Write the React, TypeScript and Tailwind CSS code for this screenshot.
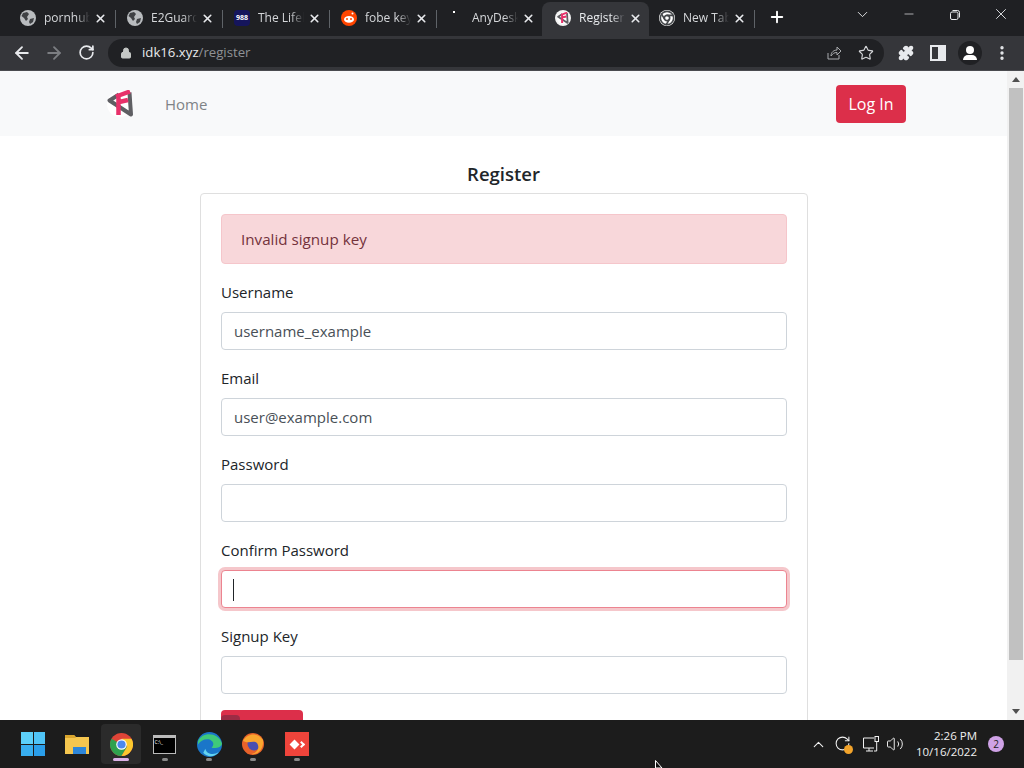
import React from "react";
import { ArrowLeft, ArrowRight, RotateCw, Lock, Star, Puzzle, MoreVertical, X, Plus, ChevronDown, Minus, ChevronUp, Volume2, Chrome } from "lucide-react";

const FONT = "font-['Open_Sans','Noto_Sans',sans-serif]";

function Favicon({ kind }: { kind: string }) {
  if (kind === "globe") return (
    <svg width="16" height="16" viewBox="0 0 16 16"><circle cx="8" cy="8" r="8" fill="#b9bcbf" /><path d="M3 3 L7 2 L9 4 L7 7 L8 9 L6 11 L4 8 L1.500 6z" fill="#3f4144" /><path d="M10 9 L14 8 L13 12 L10 14 L9 12z" fill="#3f4144" /></svg>
  );
  if (kind === "988") return <div className="w-4 h-4 rounded-sm bg-[#15155c] text-white text-[7px] font-bold flex items-center justify-center">988</div>;
  if (kind === "reddit") return (
    <svg width="16" height="16" viewBox="0 0 16 16"><circle cx="8" cy="8" r="8" fill="#ff4500" /><ellipse cx="8" cy="9.400" rx="5" ry="3.400" fill="#fff" /><circle cx="6" cy="9" r="1" fill="#ff4500" /><circle cx="10" cy="9" r="1" fill="#ff4500" /><circle cx="11.500" cy="3.600" r="1" fill="#fff" /></svg>
  );
  if (kind === "dot") return <div className="w-4 h-4 relative"><div className="absolute left-[5px] top-[1px] w-[2px] h-[2px] bg-white" /></div>;
  if (kind === "logo") return (
    <div className="w-4 h-4 rounded-full bg-[#f4f4f4] flex items-center justify-center"><Logo size={12} /></div>
  );
  return <div className="w-4 h-4 rounded-full bg-white flex items-center justify-center"><Chrome size={16} className="text-[#44474a]" strokeWidth={2.4} /></div>;
}

function Logo({ size }: { size: number }) {
  return (
    <svg width={size} height={size} viewBox="0 0 27 27">
      <circle cx="13" cy="14" r="13" fill="#ffffff" />
      <path d="M12 4.500 L2.500 10.500 L24 24.500 L22.500 2.500" fill="none" stroke="#5f5f63" strokeWidth="4" strokeLinejoin="round" />
      <path d="M11.500 25 L11.500 6.500 M9 6.500 L23 1.500 M10 12.500 L21 10" fill="none" stroke="#e8316a" strokeWidth="4.500" />
    </svg>
  );
}

function Tab({ title, icon, active, sep, last }: { title: string; icon: string; active?: boolean; sep?: boolean; last?: boolean }) {
  return (
    <div className={`relative w-[107px] h-[34px] flex items-center shrink-0 pb-[2px] ${last ? "pl-[10px]" : "pl-[13px]"} ${active ? "bg-[#35363a] rounded-t-lg" : ""}`}>
      <Favicon kind={icon} />
      <span className={`ml-2 w-[46px] overflow-hidden whitespace-nowrap text-xs ${active ? "text-[#e8eaed]" : "text-[#d5d7da]"} [mask-image:linear-gradient(to_right,black_70%,transparent)]`}>{title}</span>
      <X size={13} strokeWidth={3} className="ml-[4px] text-[#e8eaed]" />
      {sep && <div className={`absolute top-[8px] h-[18px] w-px bg-[#5f6368] ${last ? "right-[1px]" : "right-[-2px]"}`} />}
    </div>
  );
}

function Field({ label, value, focus }: { label: string; value?: string; focus?: boolean }) {
  return (
    <div className="mb-[16px]">
      <div className="text-[15px] leading-6 text-[#212529] mb-2">{label}</div>
      <div className={`h-[38px] rounded-[4px] bg-white flex items-center px-3 pt-[1px] text-[15px] ${focus ? "border border-[#ec8490] shadow-[0_0_0_3px_rgba(220,53,69,0.28)]" : "border border-[#ced4da]"} text-[#495057]`}>
        {value}
        {focus && <div className="w-px h-[22px] -ml-px bg-[#212529]" />}
      </div>
    </div>
  );
}

function Indicator({ active }: { active?: boolean }) {
  return <div className={`absolute bottom-[3px] left-1/2 -translate-x-1/2 h-[3px] rounded-full ${active ? "w-4 bg-[#dcb2e8]" : "w-[6px] bg-[#8a8a8a]"}`} />;
}

function TaskIcon({ children, active, dot }: { children: React.ReactNode; active?: boolean; dot?: boolean }) {
  return (
    <div className={`relative w-10 h-10 flex items-center justify-center rounded ${active ? "bg-[#2b2b2b]" : ""}`}>
      {children}
      {(dot || active) && <Indicator active={active} />}
    </div>
  );
}

export default function App() {
  return (
    <div className={`h-screen w-full overflow-hidden flex flex-col bg-white ${FONT}`}>
      {/* tab strip */}
      <div className="h-9 bg-[#1f2023] flex items-end pl-[7px] shrink-0">
        <Tab title="pornhub" icon="globe" sep />
        <Tab title="E2Guardian" icon="globe" sep />
        <Tab title="The Lifeline" icon="988" sep />
        <Tab title="fobe keys" icon="reddit" sep />
        <Tab title="AnyDesk" icon="dot" />
        <Tab title="Register" icon="logo" active />
        <Tab title="New Tab" icon="chrome" sep last />
        <Plus size={18} strokeWidth={2.500} className="ml-[12px] mb-[10px] text-white" />
        <ChevronDown size={17} strokeWidth={1.300} className="ml-[68px] mb-[13px] text-[#e8eaed]" />
        <Minus size={14} strokeWidth={1.200} className="ml-[31px] mb-[15px] text-[#e8eaed]" />
        <svg width="12" height="12" viewBox="0 0 12 12" className="ml-[33px] mb-[15px]" fill="none" stroke="#e8eaed"><rect x="1.500" y="3" width="7.500" height="7.500" rx="1.500" /><path d="M3.500 1.500 h5 a2 2 0 0 1 2 2 v5" /></svg>
        <X size={18} strokeWidth={1.200} className="ml-[31px] mb-[13px] text-[#e8eaed]" />
      </div>
      {/* toolbar */}
      <div className="h-[35px] bg-[#35363a] flex items-center pl-[12px] pb-[1px] shrink-0 border-b border-[#4a4b4f]">
        <ArrowLeft size={20} strokeWidth={2.200} className="text-[#e8eaed]" />
        <ArrowRight size={20} strokeWidth={2.200} className="ml-3 text-[#7c7e82]" />
        <RotateCw size={17} strokeWidth={2.400} className="ml-[14px] text-[#e8eaed]" />
        <div className="ml-[13px] w-[776px] h-[28px] rounded-full bg-[#202124] flex items-center pl-[12px] text-[13.200px]">
          <Lock size={12} className="text-[#c4c7c5]" fill="#c4c7c5" />
          <span className="ml-[10px] text-[#e8eaed]">idk16.xyz</span><span className="text-[#8f9296]">/register</span>
          <svg width="16" height="16" viewBox="0 0 16 16" fill="none" stroke="#a8abae" strokeWidth="1" className="ml-auto"><path d="M2 8 v6 h11 v-4" /><path d="M5 11 c0-4 3-6 6-6 V2 l4 4 -4 4 V7.500 c-3 0-4 1-6 3.500z" /></svg>
          <Star size={16} strokeWidth={1.700} className="ml-4 mr-[10px] text-[#d5d7da]" />
        </div>
        <Puzzle size={16} fill="#e8eaed" className="ml-[14px] text-[#e8eaed]" />
        <div className="ml-4 w-4 h-4 border-2 border-[#e8eaed] flex justify-end"><div className="w-[6px] h-full bg-[#e8eaed]" /></div>
        <div className="ml-3 w-6 h-6 rounded-full bg-[#202124] relative overflow-hidden">
          <div className="absolute left-[8px] top-[5px] w-2 h-2 rounded-full bg-white" />
          <div className="absolute left-[5px] top-[14px] w-[14px] h-[5px] rounded-t-md bg-white" />
        </div>
        <MoreVertical size={18} strokeWidth={2.500} className="ml-[11px] text-[#e8eaed]" />
      </div>
      {/* page */}
      <div className="flex-1 min-h-0 flex">
        <div className="flex-1 min-w-0 overflow-hidden text-[#212529]">
          <nav className="h-[65px] bg-[#f8f9fa] flex items-center pl-[107px] pr-[101px]">
            <Logo size={27} />
            <span className="ml-[31px] pt-[1px] text-[15px] text-[#7f8386]">Home</span>
            <button className="ml-auto w-[70px] h-[38px] rounded-[4px] bg-[#dc2f4a] text-white text-base">Log In</button>
          </nav>
          <h1 className="mt-[25px] h-[32px] text-center text-[18.500px] leading-[26px] font-semibold">Register</h1>
          <div className="ml-[200px] w-[608px] border border-[#dfdfdf] rounded-[4px] p-5">
            <div className="h-[50px] mb-[16px] rounded-[4px] bg-[#f8d7da] border border-[#f5c6cb] flex items-center pl-[19px] pt-[1px] text-[15.200px] text-[#74323c]">Invalid signup key</div>
            <Field label="Username" value="username_example" />
            <Field label="Email" value="user@example.com" />
            <Field label="Password" />
            <Field label="Confirm Password" focus />
            <Field label="Signup Key" />
            <button className="relative w-[82px] h-[38px] rounded-[4px] bg-[#dc2f4a] text-white text-base">
              Register
              <span className="absolute left-0 top-[5px] w-[19px] h-[6px] rounded-t-sm bg-[#9c2c45]" />
            </button>
          </div>
        </div>
        {/* scrollbar */}
        <div className="w-[17px] bg-[#f1f1f1] flex flex-col items-center shrink-0">
          <div className="h-[17px] flex items-center justify-center"><div className="border-x-4 border-x-transparent border-b-[5px] border-b-[#505050]" /></div>
          <div className="w-[14px] h-[572px] bg-[#c1c1c1]" />
          <div className="mt-auto h-[17px] flex items-center justify-center"><div className="border-x-4 border-x-transparent border-t-[5px] border-t-[#505050]" /></div>
        </div>
      </div>
      {/* taskbar */}
      <div className="relative h-12 bg-[#1c1c1c] shrink-0 flex items-center pl-[13px] pr-[20px]">
        <div className="flex items-center gap-[4px]">
          <TaskIcon>
            <div className="grid grid-cols-2 gap-[1px] w-6 h-6">
              <div className="bg-[#5cd0fa]" /><div className="bg-[#4fc4f7]" /><div className="bg-[#38aeef]" /><div className="bg-[#2a9eea]" />
            </div>
          </TaskIcon>
          <TaskIcon>
            <svg width="26" height="24" viewBox="0 0 26 24"><path d="M1 3 h9 l2 2 h13 v17 H1z" fill="#f5c64f" /><path d="M1 3 h9 l2 3 H1z" fill="#d9a52e" /><rect x="9" y="15" width="13" height="7" fill="#2d86d9" /></svg>
          </TaskIcon>
          <TaskIcon active>
            <svg width="23" height="23" viewBox="0 0 24 24"><circle cx="12" cy="12" r="12" fill="#de4437" /><path d="M12 12 L1.600 6 A12 12 0 0 0 12 24 L18 14z" fill="#2fa14f" /><path d="M12 6 H22.400 A12 12 0 0 1 12 24 L18 14z" fill="#fbc82e" /><circle cx="12" cy="12" r="5.500" fill="#fff" /><circle cx="12" cy="12" r="4.300" fill="#4a88ee" /></svg>
          </TaskIcon>
          <TaskIcon dot>
            <div className="w-[23px] h-[19px] -ml-[2px] bg-black border border-[#bbb] border-t-[3px] text-[5px] leading-[8px] text-white pl-[1px]">C:\_</div>
          </TaskIcon>
          <TaskIcon dot>
            <svg width="25" height="25" viewBox="0 0 24 24"><circle cx="12" cy="12" r="12" fill="#1a76c9" /><path d="M1 9 C4 0 20 -1 24 11 C24 15 17 16 14 15 C18 11 14 7 10 7 C6 7 3 9 1 12z" fill="#3fc97a" /><path d="M8 16 C9 21 16 23 21 19 C18 24 10 25 6 20z" fill="#64d4f0" /></svg>
          </TaskIcon>
          <TaskIcon dot>
            <svg width="24" height="24" viewBox="0 0 24 24"><circle cx="12" cy="12" r="11" fill="#e8622a" /><circle cx="13" cy="12" r="6.500" fill="#4a4fb0" /><path d="M2 9 C6 1 17 0 22 8 C23 18 16 23 10 22 C17 21 19 15 16 11 C12 8 8 12 2 9z" fill="#f9a62f" /></svg>
          </TaskIcon>
          <TaskIcon dot>
            <div className="w-6 h-6 bg-[#ef443b] flex items-center justify-center gap-[1px]">
              <div className="w-[7px] h-[7px] bg-white rotate-45" />
              <div className="w-[5px] h-[5px] border-t-2 border-r-2 border-white rotate-45" />
            </div>
          </TaskIcon>
        </div>
        <div className="ml-auto flex items-center text-[#f0f0f0]">
          <ChevronUp size={17} strokeWidth={1.500} />
          <div className="relative ml-[7px] w-[18px] h-[18px]">
            <RotateCw size={17} strokeWidth={1.500} />
            <div className="absolute right-[-1px] bottom-[-1px] w-[9px] h-[9px] rounded-full bg-[#f3a42b]" />
          </div>
          <svg width="18" height="18" viewBox="0 0 18 18" fill="none" stroke="#f0f0f0" className="ml-[10px]"><path d="M12 3 H1.500 V13 H12 M7 13 v3 M4 16 h7" /><rect x="13" y="1.500" width="3.500" height="5" /><path d="M14.700 6 V16 H12" /></svg>
          <Volume2 size={18} strokeWidth={1.300} className="ml-[6px]" />
          <div className="w-[73px] text-right text-[11.500px] leading-[16px]">
            <div>2:26 PM</div>
            <div>10/16/2022</div>
          </div>
          <div className="ml-[11px] w-4 h-4 rounded-full bg-[#cfa2e6] text-[#1c1c1c] text-[10px] flex items-center justify-center">2</div>
        </div>
        <svg width="10" height="8" viewBox="0 0 10 8" className="absolute left-[655px] bottom-0"><path d="M0.500 0.500 L0.500 8 L7 8z" fill="#111" stroke="#fff" /></svg>
      </div>
    </div>
  );
}
